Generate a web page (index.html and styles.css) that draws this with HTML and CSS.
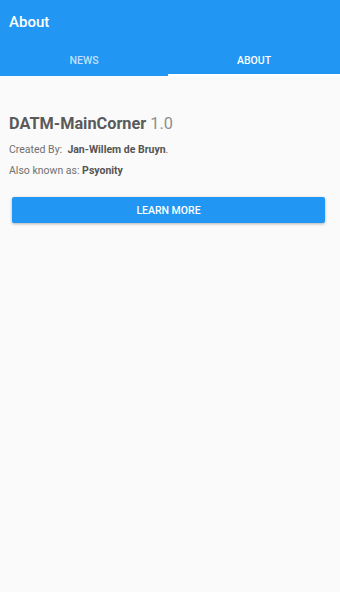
FILE: index.html
```html
<!DOCTYPE html>
<html>
<head>
<meta charset="utf-8">
<link rel="stylesheet" href="styles.css">
</head>
<body>
<div class="app">
  <header class="appbar">
    <div class="toolbar"><span class="title">About</span></div>
    <nav class="tabs">
      <div class="tab">NEWS</div>
      <div class="tab active">ABOUT</div>
    </nav>
  </header>
  <main class="content">
    <h1 class="name">DATM-MainCorner <span class="ver">1.0</span></h1>
    <p class="line">Created By:&nbsp; <b>Jan-Willem de Bruyn</b>.</p>
    <p class="line">Also known as: <b>Psyonity</b></p>
    <button class="btn">LEARN MORE</button>
  </main>
</div>
</body>
</html>
```
FILE: styles.css
```css
html, body {
  margin: 0;
  padding: 0;
  height: 100%;
}
body {
  font-family: Roboto, "Liberation Sans", sans-serif;
  background: #fafafa;
}
.app {
  min-height: 100%;
}
.appbar {
  background: #2196f3;
  color: #fff;
}
.toolbar {
  height: 44px;
  display: flex;
  align-items: center;
  padding-left: 9px;
  box-sizing: border-box;
}
.title {
  font-size: 15px;
  font-weight: 500;
}
.tabs {
  display: flex;
  height: 32px;
}
.tab {
  flex: 1;
  display: flex;
  align-items: center;
  justify-content: center;
  font-size: 10.5px;
  font-weight: 500;
  color: rgba(255,255,255,0.72);
  box-sizing: border-box;
  padding-top: 1px;
}
.tab:first-child {
  flex: 0 0 168px;
}
.tab.active {
  color: #fff;
  border-bottom: 2px solid #fff;
  padding-top: 3px;
}
.content {
  padding: 37px 15px 0 9px;
  display: flex;
  flex-direction: column;
}
.name {
  margin: 0;
  font-size: 16.3px;
  font-weight: 700;
  color: #5a5a5a;
  line-height: 22px;
}
.ver {
  font-weight: 400;
  color: #8e8e8e;
}
.line {
  margin: 0;
  font-size: 10.5px;
  color: #707070;
  line-height: 14px;
  margin-top: 7px;
}
.line:first-of-type {
  margin-top: 8px;
}
.line b {
  color: #555;
  font-weight: 700;
}
.btn {
  margin: 19px 0 0 3px;
  height: 26px;
  width: 313px;
  border: none;
  border-radius: 2px;
  background: #2196f3;
  color: #fff;
  font-family: Roboto, "Liberation Sans", sans-serif;
  font-size: 10.5px;
  font-weight: 500;
  box-shadow: 0 1px 3px rgba(0,0,0,0.3);
  padding: 0;
}
```
